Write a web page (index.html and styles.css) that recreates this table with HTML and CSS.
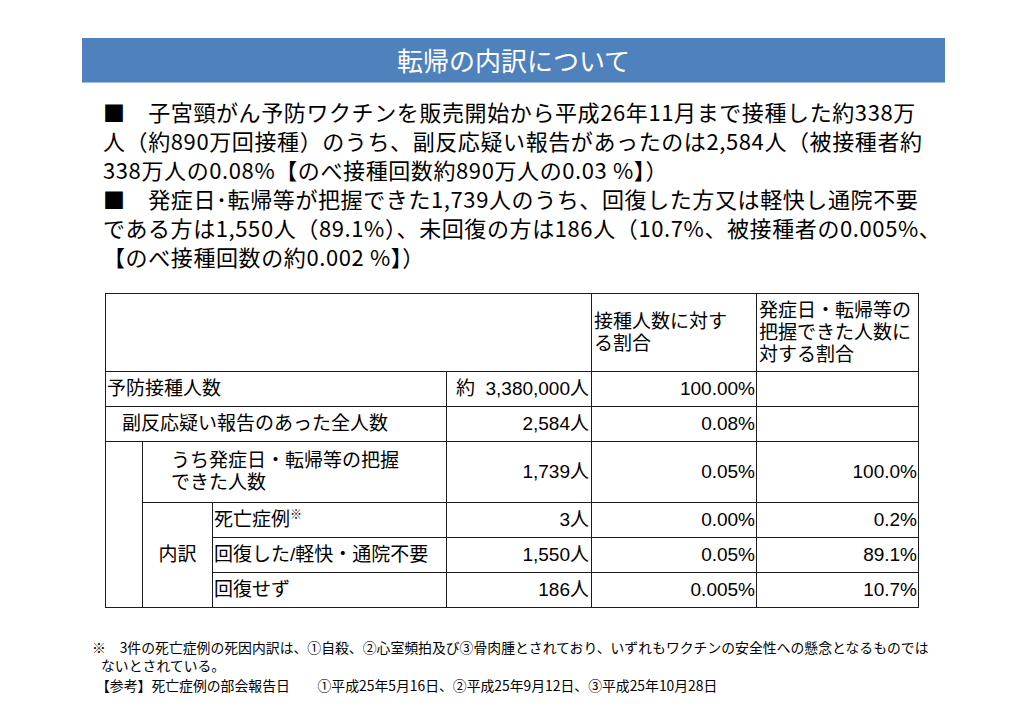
FILE: index.html
```html
<!DOCTYPE html>
<html lang="ja">
<head>
<meta charset="utf-8">
<title>転帰の内訳について</title>
<link rel="stylesheet" href="styles.css">
</head>
<body>
<div class="page">
  <header class="title-bar"><h1>転帰の内訳について</h1></header>
  <div class="summary">
    <p>■　子宮頸がん予防ワクチンを販売開始から平成26年11月まで接種した約338万</p>
    <p>人（約890万回接種）のうち、副反応疑い報告があったのは2,584人（被接種者約</p>
    <p>338万人の0.08%【のべ接種回数約890万人の0.03 %】）</p>
    <p>■　発症日･転帰等が把握できた1,739人のうち、回復した方又は軽快し通院不要</p>
    <p>である方は1,550人（89.1%）、未回復の方は186人（10.7%、被接種者の0.005%、</p>
    <p>【のべ接種回数の約0.002 %】）</p>
  </div>
  <table class="data">
    <colgroup>
      <col class="c1"><col class="c2"><col class="c3"><col class="c4"><col class="c5"><col class="c6">
    </colgroup>
    <tr class="r-head">
      <td colspan="4"></td>
      <td class="hd">接種人数に対す<br>る割合</td>
      <td class="hd">発症日・転帰等の<br>把握できた人数に<br>対する割合</td>
    </tr>
    <tr class="r-std">
      <td colspan="3" class="lbl">予防接種人数</td>
      <td class="num"><div class="split"><span>約</span><span>3,380,000人</span></div></td>
      <td class="pct">100.00%</td>
      <td></td>
    </tr>
    <tr class="r-std">
      <td colspan="3" class="lbl indent1">副反応疑い報告のあった全人数</td>
      <td class="num">2,584人</td>
      <td class="pct">0.08%</td>
      <td></td>
    </tr>
    <tr class="r-tall">
      <td rowspan="4"></td>
      <td colspan="2" class="lbl indent2">うち発症日・転帰等の把握<br>できた人数</td>
      <td class="num">1,739人</td>
      <td class="pct">0.05%</td>
      <td class="pct">100.0%</td>
    </tr>
    <tr class="r-std">
      <td rowspan="3" class="center">内訳</td>
      <td class="lbl">死亡症例<sup class="mark">※</sup></td>
      <td class="num">3人</td>
      <td class="pct">0.00%</td>
      <td class="pct">0.2%</td>
    </tr>
    <tr class="r-std">
      <td class="lbl">回復した/軽快・通院不要</td>
      <td class="num">1,550人</td>
      <td class="pct">0.05%</td>
      <td class="pct">89.1%</td>
    </tr>
    <tr class="r-std">
      <td class="lbl">回復せず</td>
      <td class="num">186人</td>
      <td class="pct">0.005%</td>
      <td class="pct">10.7%</td>
    </tr>
  </table>
  <div class="notes">
    <p class="n1">※　3件の死亡症例の死因内訳は、①自殺、②心室頻拍及び③骨肉腫とされており、いずれもワクチンの安全性への懸念となるものでは</p>
    <p class="n2">ないとされている。</p>
    <p class="n3">【参考】死亡症例の部会報告日　　①平成25年5月16日、②平成25年9月12日、③平成25年10月28日</p>
  </div>
</div>
</body>
</html>
```

FILE: styles.css
```css
html, body {
  margin: 0;
  padding: 0;
  background: #ffffff;
}

body {
  font-family: "Noto Sans CJK JP", sans-serif;
  color: #000000;
}

.page {
  padding-top: 38px;
}

.title-bar {
  margin-left: 82px;
  width: 863px;
  height: 44px;
  background: #4f81bd;
  border-bottom: 1px solid #9dbbe2;
  display: flex;
  align-items: center;
  justify-content: center;
}

.title-bar h1 {
  margin: 0;
  font-size: 26px;
  font-weight: 400;
  line-height: 1;
  color: #ffffff;
}

.summary {
  margin: 14px 0 0 103px;
  font-size: 22px;
  letter-spacing: 0.6px;
  line-height: 29px;
}

.summary p {
  margin: 0;
  white-space: nowrap;
}

.data {
  margin: 22px 0 0 105px;
  width: 813px;
  border-collapse: collapse;
  table-layout: fixed;
  font-family: "Liberation Sans", "Noto Sans CJK JP", sans-serif;
  font-size: 19px;
}

.c1 { width: 37px; }
.c2 { width: 70px; }
.c3 { width: 234px; }
.c4 { width: 145px; }
.c5 { width: 165px; }
.c6 { width: 162px; }

.data td {
  border: 1px solid #1c1c1c;
  padding: 0 1px;
  line-height: 22px;
  vertical-align: middle;
  white-space: nowrap;
}

.r-head { height: 78px; }
.r-std { height: 35px; }
.r-tall { height: 61px; }

.data td.hd {
  text-align: left;
  padding-left: 2px;
}

.data td.lbl {
  text-align: left;
}

.data td.indent1 {
  padding-left: 16px;
}

.data td.indent2 {
  padding-left: 28px;
}

.data td.center {
  text-align: center;
}

.data td.num {
  text-align: right;
  padding-right: 2px;
}

.split {
  display: flex;
  justify-content: space-between;
  padding-left: 8px;
}

.data td.pct {
  text-align: right;
  padding-right: 1px;
}

.mark {
  font-size: 12px;
  line-height: 0;
  vertical-align: 7px;
}

.notes {
  margin: 30px 0 0 92px;
  font-size: 13.85px;
  line-height: 18px;
}

.notes p {
  margin: 0;
  white-space: nowrap;
}

.notes .n2 {
  padding-left: 9px;
}

.notes .n3 {
  margin-top: 2px;
  padding-left: 4px;
}
```
